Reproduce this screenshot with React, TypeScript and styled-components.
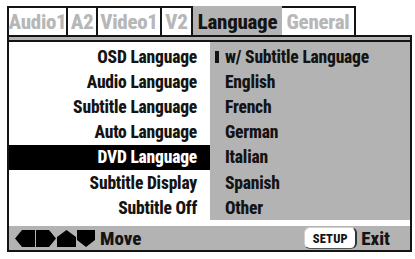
import React from "react";
import styled, { createGlobalStyle } from "styled-components";

const Global = createGlobalStyle`
  html, body { margin: 0; padding: 0; background: #ffffff; }
  body { font-family: "Roboto Condensed", "Roboto", sans-serif; }
`;

const GRAY = "#b3b3b3";
const INK = "#141414";

const Screen = styled.div`
  width: 415px;
  height: 259px;
  box-sizing: border-box;
  padding: 6px 0 0 7px;
  font-family: "Roboto Condensed", "Roboto", sans-serif;
  font-weight: 800;
  color: ${INK};
`;

const TabBar = styled.div`
  display: flex;
  height: 29px;
`;

const Tab = styled.div<{ $w: number; $active?: boolean; $first?: boolean }>`
  box-sizing: border-box;
  width: ${(p) => p.$w}px;
  height: 29px;
  display: flex;
  align-items: center;
  justify-content: center;
  font-size: 21px;
  letter-spacing: -0.3px;
  padding-top: 1px;
  background: ${(p) => (p.$active ? GRAY : "#ffffff")};
  color: ${(p) => (p.$active ? INK : "#b7b7b7")};
  border-top: 2px solid ${(p) => (p.$active ? GRAY : INK)};
  border-right: ${(p) => (p.$active ? "none" : `2px solid ${INK}`)};
  border-left: ${(p) => (p.$first ? `2px solid ${INK}` : "none")};
`;

const Frame = styled.div`
  box-sizing: border-box;
  width: 405px;
  border: 2px solid ${INK};
  display: flex;
  flex-direction: column;
`;

const Band = styled.div`
  height: 3px;
  background: ${GRAY};
  border-bottom: 2px solid ${INK};
`;

const Body = styled.div`
  display: grid;
  grid-template-columns: 201px 200px;
`;

const LeftCol = styled.div`
  background: #ffffff;
  padding-top: 2px;
`;

const RightCol = styled.div`
  background: #ffffff;
  padding-bottom: 6px;
`;

const RightPanel = styled.div`
  background: ${GRAY};
  padding-top: 2px;
`;

const Row = styled.div<{ $selected?: boolean }>`
  height: 25.2px;
  display: flex;
  align-items: center;
  font-size: 17.5px;
  letter-spacing: -0.2px;
  white-space: nowrap;
`;

const LeftRow = styled(Row)`
  justify-content: flex-end;
  padding-right: 13px;
  background: ${(p) => (p.$selected ? "#000000" : "transparent")};
  color: ${(p) => (p.$selected ? "#ffffff" : INK)};
`;

const RightRow = styled(Row)`
  padding-left: 15px;
`;

const Marker = styled.span`
  display: inline-block;
  width: 4px;
  height: 12px;
  background: ${INK};
  margin-left: -10px;
  margin-right: 6px;
`;

const Footer = styled.div`
  height: 24px;
  background: ${GRAY};
  display: flex;
  align-items: center;
  padding-left: 6px;
  padding-right: 20px;
`;

const Arrows = styled.div`
  display: flex;
  align-items: center;
  gap: 1px;
`;

const FootText = styled.span`
  font-size: 19px;
  margin-left: 5px;
`;

const ExitGroup = styled.div`
  margin-left: auto;
  display: flex;
  align-items: center;
  gap: 4px;
`;

const SetupKey = styled.div`
  box-sizing: border-box;
  width: 53px;
  height: 22px;
  background: #ffffff;
  border: 1px solid #d0d0d0;
  border-right: 2px solid #333;
  border-bottom: 1.5px solid #555;
  border-radius: 6px;
  display: flex;
  align-items: center;
  justify-content: center;
  font-size: 12.5px;
  letter-spacing: 0.2px;
`;

const ExitText = styled.span`
  font-size: 19px;
`;

const tabs = [
  { label: "Audio1", w: 61 },
  { label: "A2", w: 30 },
  { label: "Video1", w: 64 },
  { label: "V2", w: 31 },
  { label: "Language", w: 89, active: true },
  { label: "General", w: 74 },
];

const leftItems = [
  "OSD Language",
  "Audio Language",
  "Subtitle Language",
  "Auto Language",
  "DVD Language",
  "Subtitle Display",
  "Subtitle Off",
];

const rightItems = [
  "w/ Subtitle Language",
  "English",
  "French",
  "German",
  "Italian",
  "Spanish",
  "Other",
];

const Icon = ({ pts, w }: { pts: string; w: number }) => (
  <svg width={w} height={17} viewBox={`0 0 ${w} 17`}>
    <polygon points={pts} fill="#000" />
  </svg>
);

export default function App() {
  return (
    <>
      <Global />
      <Screen>
        <TabBar>
          {tabs.map((t, i) => (
            <Tab key={t.label} $w={t.w} $active={t.active} $first={i === 0}>
              {t.label}
            </Tab>
          ))}
        </TabBar>
        <Frame>
          <Band />
          <Body>
            <LeftCol>
              {leftItems.map((s, i) => (
                <LeftRow key={s} $selected={i === 4}>
                  {s}
                </LeftRow>
              ))}
            </LeftCol>
            <RightCol>
              <RightPanel>
                {rightItems.map((s, i) => (
                  <RightRow key={s}>
                    {i === 0 && <Marker />}
                    {s}
                  </RightRow>
                ))}
              </RightPanel>
            </RightCol>
          </Body>
          <Footer>
            <Arrows>
              <Icon w={20} pts="0,8.5 7,0 20,0 20,17 7,17" />
              <Icon w={20} pts="0,0 13,0 20,8.5 13,17 0,17" />
              <Icon w={19} pts="0,7 9.5,0 19,7 19,17 0,17" />
              <Icon w={18} pts="0,0 18,0 18,10 9,17 0,10" />
            </Arrows>
            <FootText>Move</FootText>
            <ExitGroup>
              <SetupKey>SETUP</SetupKey>
              <ExitText>Exit</ExitText>
            </ExitGroup>
          </Footer>
        </Frame>
      </Screen>
    </>
  );
}
